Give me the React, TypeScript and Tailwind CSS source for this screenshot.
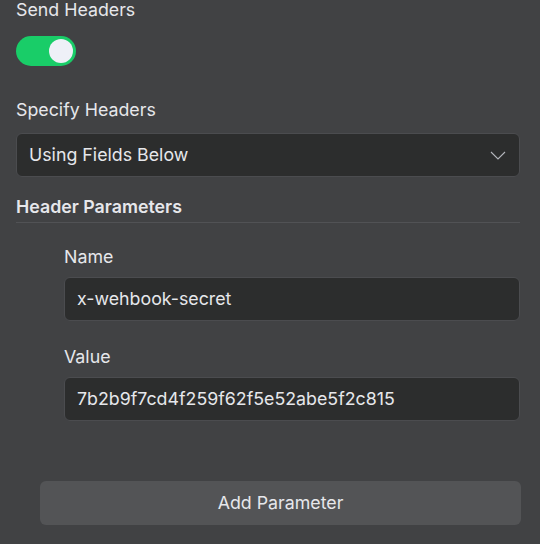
import { useState } from 'react';

const FONT = 'font-["Inter","Liberation_Sans",sans-serif]';

function Toggle({ on, onChange }: { on: boolean; onChange: (v: boolean) => void }) {
  return (
    <button
      type="button"
      onClick={() => onChange(!on)}
      className={`flex h-[30px] w-[60px] items-center rounded-full px-[3px] ${
        on ? 'justify-end bg-[#19cd68]' : 'justify-start bg-[#5a5b5e]'
      }`}
    >
      <span className="h-6 w-6 rounded-full bg-[#eef0f7]" />
    </button>
  );
}

function Field({ label, value }: { label: string; value: string }) {
  return (
    <div>
      <div className="text-[17.8px] leading-6 text-[#e6e7eb]">{label}</div>
      <div className="mt-2 flex h-11 items-center rounded-md border border-[#4b4c4f] bg-[#2c2d2d] px-3 text-[17.8px] text-[#e6e7eb]">
        {value}
      </div>
    </div>
  );
}

export default function App() {
  const [sendHeaders, setSendHeaders] = useState(true);

  return (
    <div className={`${FONT} min-h-[544px] w-[540px] overflow-hidden bg-[#414244] pl-4 pr-5`}>
      <div className="text-[17.8px] leading-5 text-[#e6e7eb]">Send Headers</div>
      <div className="mt-4">
        <Toggle on={sendHeaders} onChange={setSendHeaders} />
      </div>

      <div className="mt-8 text-[17.8px] leading-6 text-[#e6e7eb]">Specify Headers</div>
      <div className="mt-[11px] flex h-11 items-center justify-between rounded-md border border-[#4b4c4f] bg-[#2c2d2d] pl-3 pr-[13px] text-[17.8px] text-[#e6e7eb]">
        <span>Using Fields Below</span>
        <svg width="16" height="9" viewBox="0 0 16 9" fill="none">
          <path d="M1 1l7 7 7-7" stroke="#b4b6bc" strokeWidth="1.1" />
        </svg>
      </div>

      {/* Header parameters */}
      <div className="mt-[18px] border-b border-[#515255] pb-[3px] text-[17.8px] font-semibold leading-6 text-[#e6e7eb]">
        Header Parameters
      </div>
      <div className="space-y-6 pl-12 pt-[22px]">
        <Field label="Name" value="x-wehbook-secret" />
        <Field label="Value" value="7b2b9f7cd4f259f62f5e52abe5f2c815" />
      </div>

      <div className="pl-6 pt-[60px]">
        <button
          type="button"
          className="flex h-11 w-[481px] items-center justify-center rounded-md bg-[#535456] text-[17.8px] text-[#e6e7eb]"
        >
          Add Parameter
        </button>
      </div>
    </div>
  );
}
